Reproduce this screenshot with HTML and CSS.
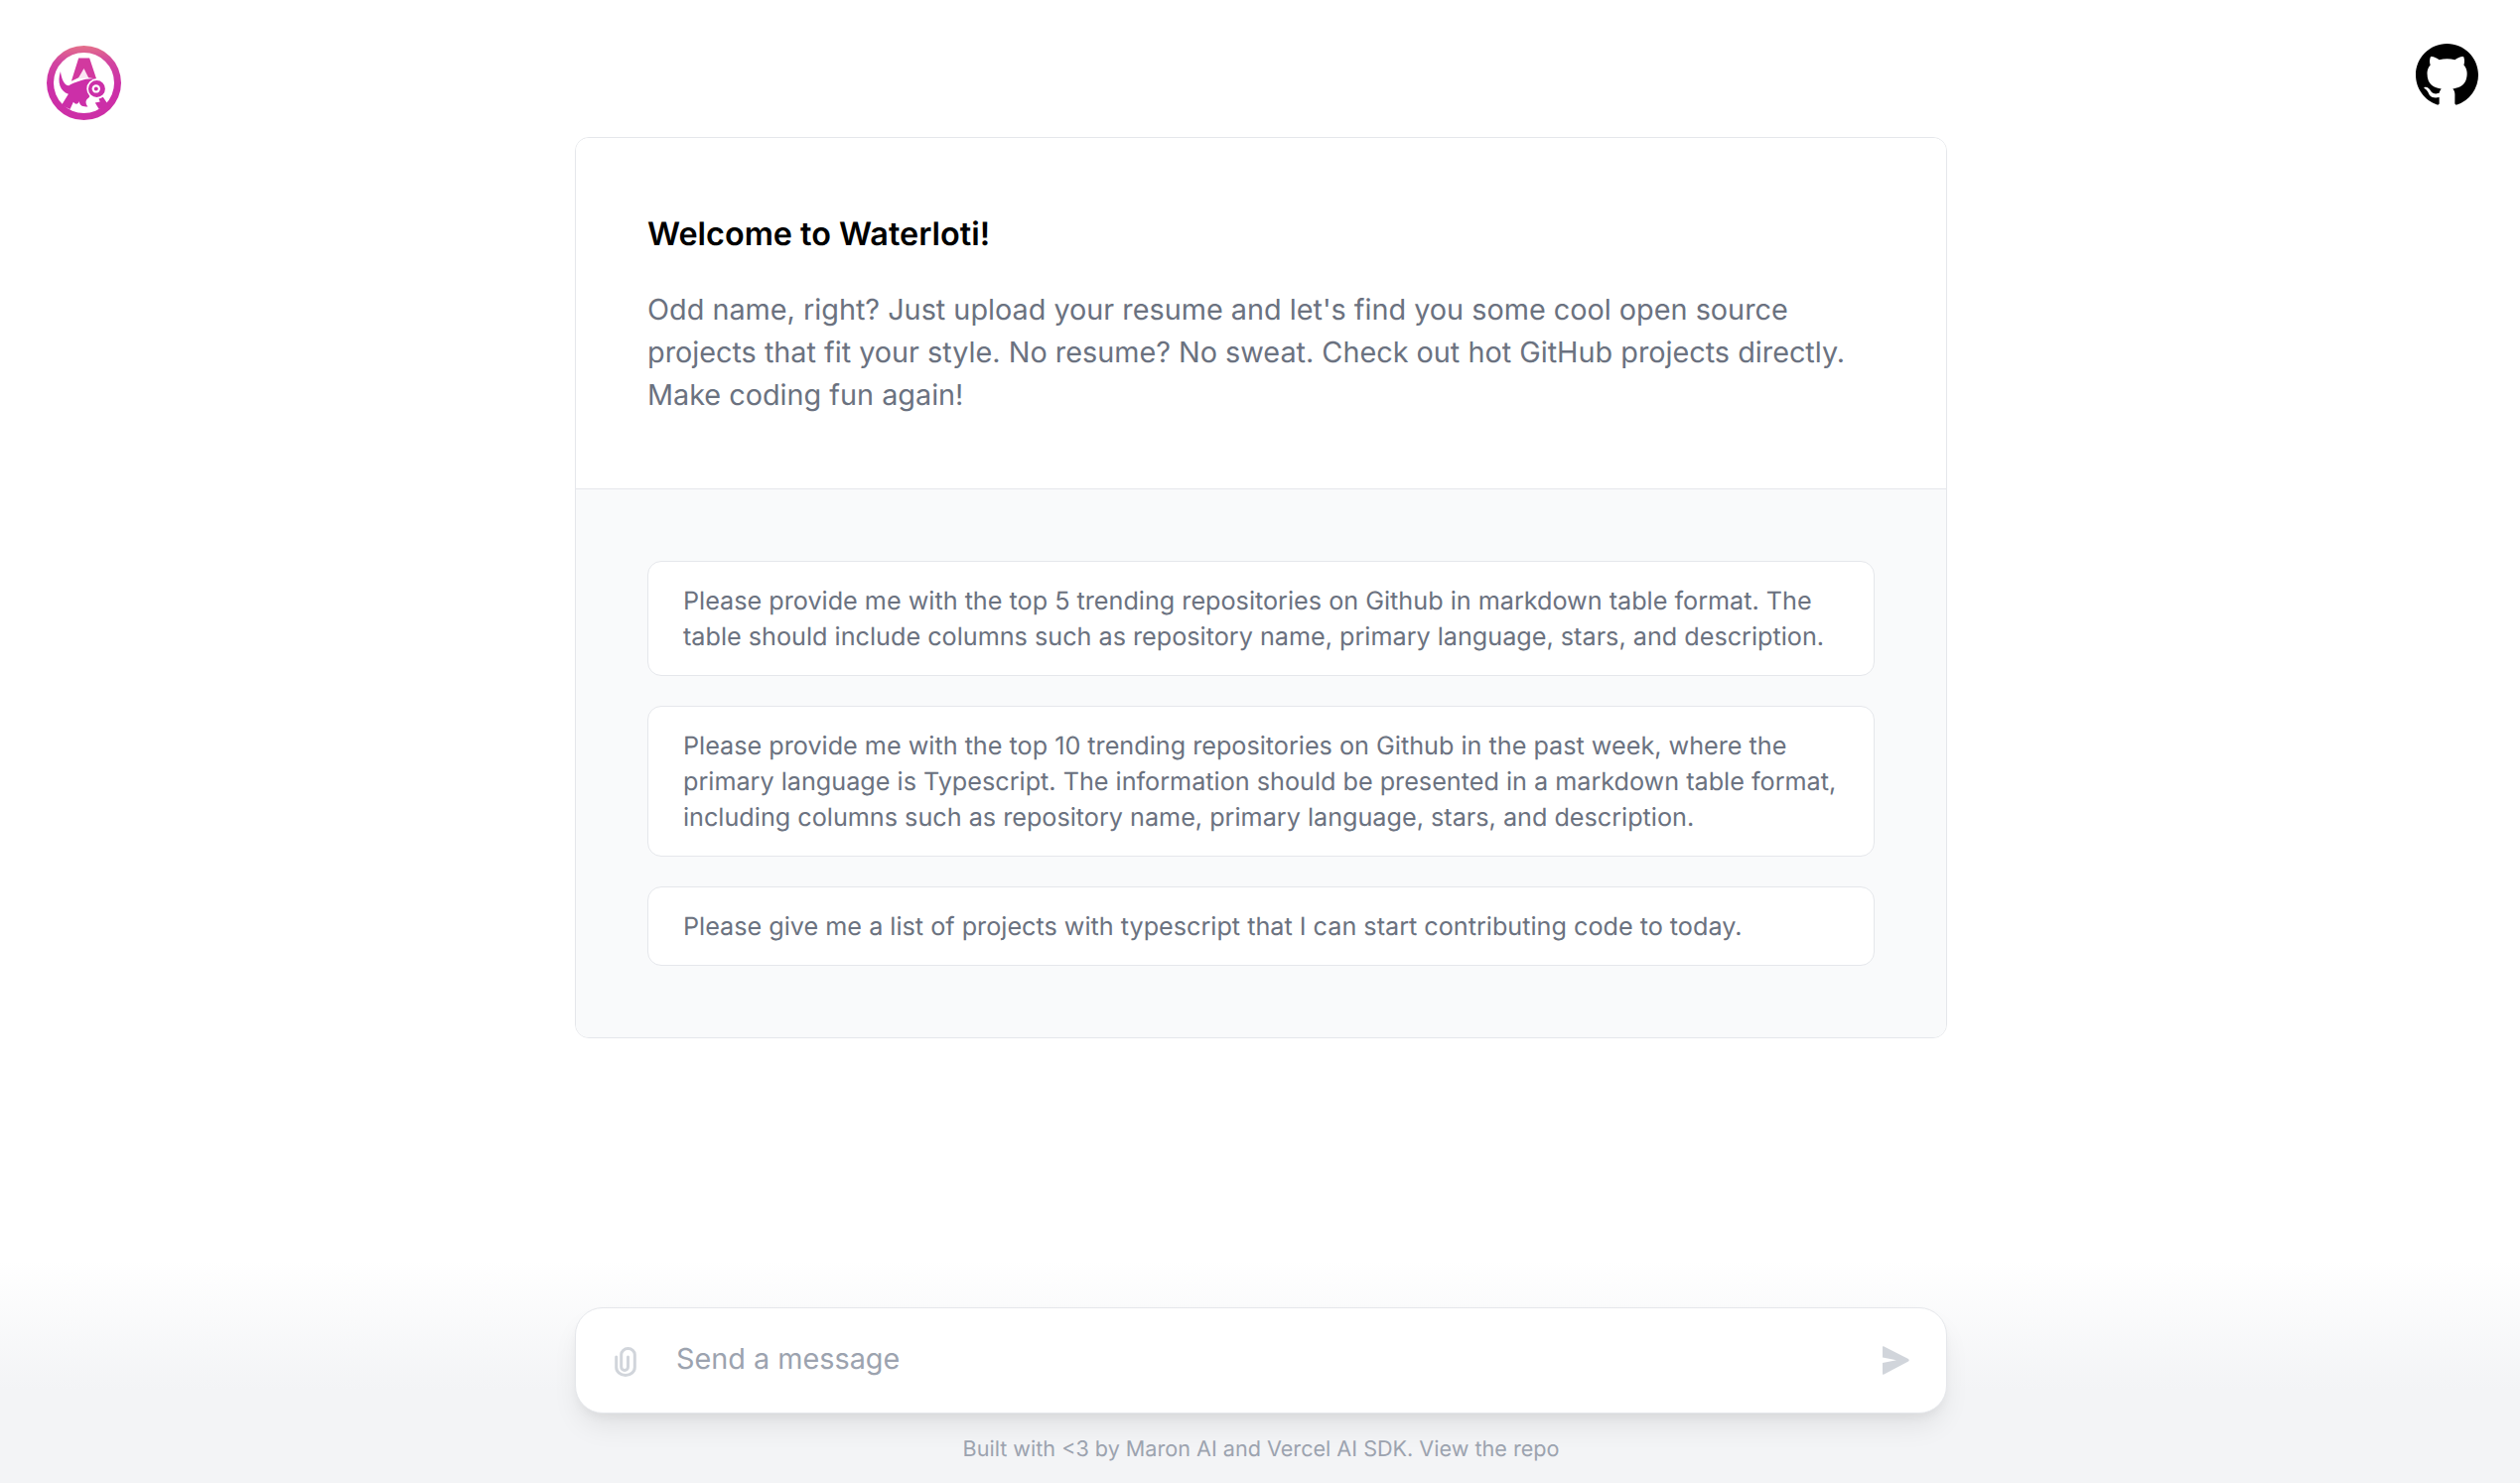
FILE: index.html
```html
<!DOCTYPE html>
<html lang="en">
<head>
<meta charset="utf-8">
<title>Waterloti</title>
<link rel="stylesheet" href="styles.css">
</head>
<body>
<div class="page">
  <header class="topbar">
    <a class="logo" href="#" aria-label="Waterloti">
      <svg viewBox="141 137 226 226" width="75" height="75">
        <defs>
          <linearGradient id="lg" x1="0" y1="0" x2="0" y2="1">
            <stop offset="0" stop-color="#e4708a"/>
            <stop offset="0.22" stop-color="#d245a0"/>
            <stop offset="0.55" stop-color="#cc2fa8"/>
            <stop offset="1" stop-color="#cd2fa6"/>
          </linearGradient>
        </defs>
        <path fill="url(#lg)" fill-rule="evenodd" d="M254 137a113 113 0 1 0 0 226a113 113 0 0 0 0-226zM254 158a92 92 0 1 1 0 184a92 92 0 0 1 0-184z"/>
        <path fill="#fbe3f3" d="M254 205L238 238L270 234Z"/>
        <path fill="#d2399f" d="M238 175H271L292 238L268 234L254 206L238 234L216 245Z"/>
        <path fill="#cc2fa8" d="M183 215C172 248 182 275 207 284L186 318L212 330L222 308C228 316 236 316 240 306C240 318 250 324 266 322C258 312 258 302 268 296C282 280 276 256 290 238C262 234 232 246 208 258C196 258 186 240 183 215Z"/>
        <path fill="#cc2fa8" d="M299 298L312 293L330 319L300 330L288 310L303 307Z"/>
        <circle cx="293" cy="268" r="28" fill="#cc2fa8" stroke="#fff" stroke-width="5"/>
        <circle cx="291" cy="268" r="12.5" fill="#fff"/>
        <circle cx="291" cy="268" r="6" fill="#cc2fa8"/>
      </svg>
    </a>
    <a class="github" href="#" aria-label="GitHub">
      <svg viewBox="0 0 16 16" width="63" height="63">
        <path fill="#000" d="M8 0C3.58 0 0 3.58 0 8c0 3.54 2.29 6.53 5.47 7.59.4.07.55-.17.55-.38 0-.19-.01-.82-.01-1.49-2.01.37-2.53-.49-2.69-.94-.09-.23-.48-.94-.82-1.13-.28-.15-.68-.52-.01-.53.63-.01 1.08.58 1.23.82.72 1.21 1.87.87 2.33.66.07-.52.28-.87.51-1.07-1.78-.2-3.64-.89-3.64-3.95 0-.87.31-1.59.82-2.15-.08-.2-.36-1.02.08-2.12 0 0 .67-.21 2.2.82.64-.18 1.32-.27 2-.27.68 0 1.36.09 2 .27 1.53-1.04 2.2-.82 2.2-.82.44 1.1.16 1.92.08 2.12.51.56.82 1.27.82 2.15 0 3.07-1.87 3.75-3.65 3.95.29.25.54.73.54 1.48 0 1.07-.01 1.93-.01 2.2 0 .21.15.46.55.38A8.013 8.013 0 0016 8c0-4.42-3.58-8-8-8z"/>
      </svg>
    </a>
  </header>

  <main class="main">
    <section class="card">
      <div class="intro">
        <h1 class="title">Welcome to Waterloti!</h1>
        <p class="lead">Odd name, right? Just upload your resume and let's find you some cool open source projects that fit your style. No resume? No sweat. Check out hot GitHub projects directly. Make coding fun again!</p>
      </div>
      <div class="prompts">
        <button class="prompt">Please provide me with the top 5 trending repositories on Github in markdown table format. The table should include columns such as repository name, primary language, stars, and description.</button>
        <button class="prompt">Please provide me with the top 10 trending repositories on Github in the past week, where the primary language is Typescript. The information should be presented in a markdown table format, including columns such as repository name, primary language, stars, and description.</button>
        <button class="prompt">Please give me a list of projects with typescript that I can start contributing code to today.</button>
      </div>
    </section>
  </main>

  <footer class="composer">
    <form class="inputbox">
      <svg class="clip" viewBox="0 0 22 30" width="22" height="30">
        <path fill="none" stroke="#d1d5db" stroke-width="3" stroke-linecap="round" d="M1.7 10V20.5a9.3 8 0 0 0 18.6 0V7.5a6.8 6 0 0 0-13.6 0V20a3.4 3.4 0 0 0 6.8 0V10"/>
      </svg>
      <span class="placeholder">Send a message</span>
      <svg class="send" viewBox="0 0 27 29" width="27" height="29">
        <path fill="#d1d5db" d="M0 1Q0 0 1 .3L26 13Q27.500 14.300 26 15.500L1 28.700Q0 29 0 28V17L14 14.300L0 11.500Z"/>
      </svg>
    </form>
    <p class="credit">Built with &lt;3 by Maron AI and Vercel AI SDK. View the repo</p>
  </footer>
</div>
</body>
</html>
```
FILE: styles.css
```css
* { box-sizing: border-box; }
html, body { margin: 0; height: 100%; }
body {
  font-family: Inter, "Liberation Sans", sans-serif;
  background: #fff;
  color: #000;
  text-rendering: geometricPrecision;
}
.page {
  height: 100vh;
  display: flex;
  flex-direction: column;
  overflow: hidden;
}
.topbar {
  height: 138px;
  flex: none;
  display: flex;
  justify-content: space-between;
  align-items: flex-start;
  padding: 46px 42px 0 47px;
}
.logo, .github { display: block; line-height: 0; }
.github { margin-top: -2px; }
.main {
  flex: 1;
  display: flex;
  justify-content: center;
  align-items: flex-start;
  padding-left: 2px;
}
.card {
  width: 1382px;
  border: 1px solid #e5e7eb;
  border-radius: 14px;
  overflow: hidden;
  background: #fff;
}
.intro {
  padding: 72px 72px;
  height: 353px;
  background: #fff;
}
.title {
  margin: 0 0 29px;
  font-size: 32.4px;
  line-height: 50px;
  font-weight: 600;
  color: #000;
}
.lead {
  margin: 0;
  font-size: 28.8px;
  line-height: 43.2px;
  color: #6b7280;
}
.prompts {
  border-top: 1px solid #e5e7eb;
  background: #f9fafb;
  padding: 72px 72px;
  display: flex;
  flex-direction: column;
  gap: 30px;
}
.prompt {
  display: block;
  width: 100%;
  border: 1px solid #e5e7eb;
  border-radius: 14px;
  background: #fff;
  padding: 22px 35px 20px;
  font: 400 25.2px/36px Inter, "Liberation Sans", sans-serif;
  color: #6b7280;
  text-align: left;
  text-rendering: geometricPrecision;
}
.composer {
  flex: none;
  height: 224px;
  padding-top: 47px;
  padding-left: 2px;
  display: flex;
  flex-direction: column;
  align-items: center;
  background: linear-gradient(to bottom, #ffffff 0%, #f3f4f6 58%, #f3f4f6 100%);
}
.inputbox {
  width: 1382px;
  height: 107px;
  flex: none;
  display: flex;
  align-items: center;
  padding: 0 37px 0 39px;
  background: #fff;
  border: 1px solid #e5e7eb;
  border-radius: 28px;
  box-shadow: 0 16px 28px -4px rgba(0, 0, 0, 0.08), 0 6px 12px -4px rgba(0, 0, 0, 0.06);
}
.clip { flex: none; margin-top: 2px; }
.placeholder {
  flex: 1;
  margin-left: 40px;
  font-size: 28.8px;
  line-height: 43px;
  color: #9ca3af;
  margin-top: -4px;
}
.send { flex: none; }
.credit {
  margin: 20px 0 0;
  font-size: 21.6px;
  line-height: 32px;
  color: #9ca3af;
}
```
